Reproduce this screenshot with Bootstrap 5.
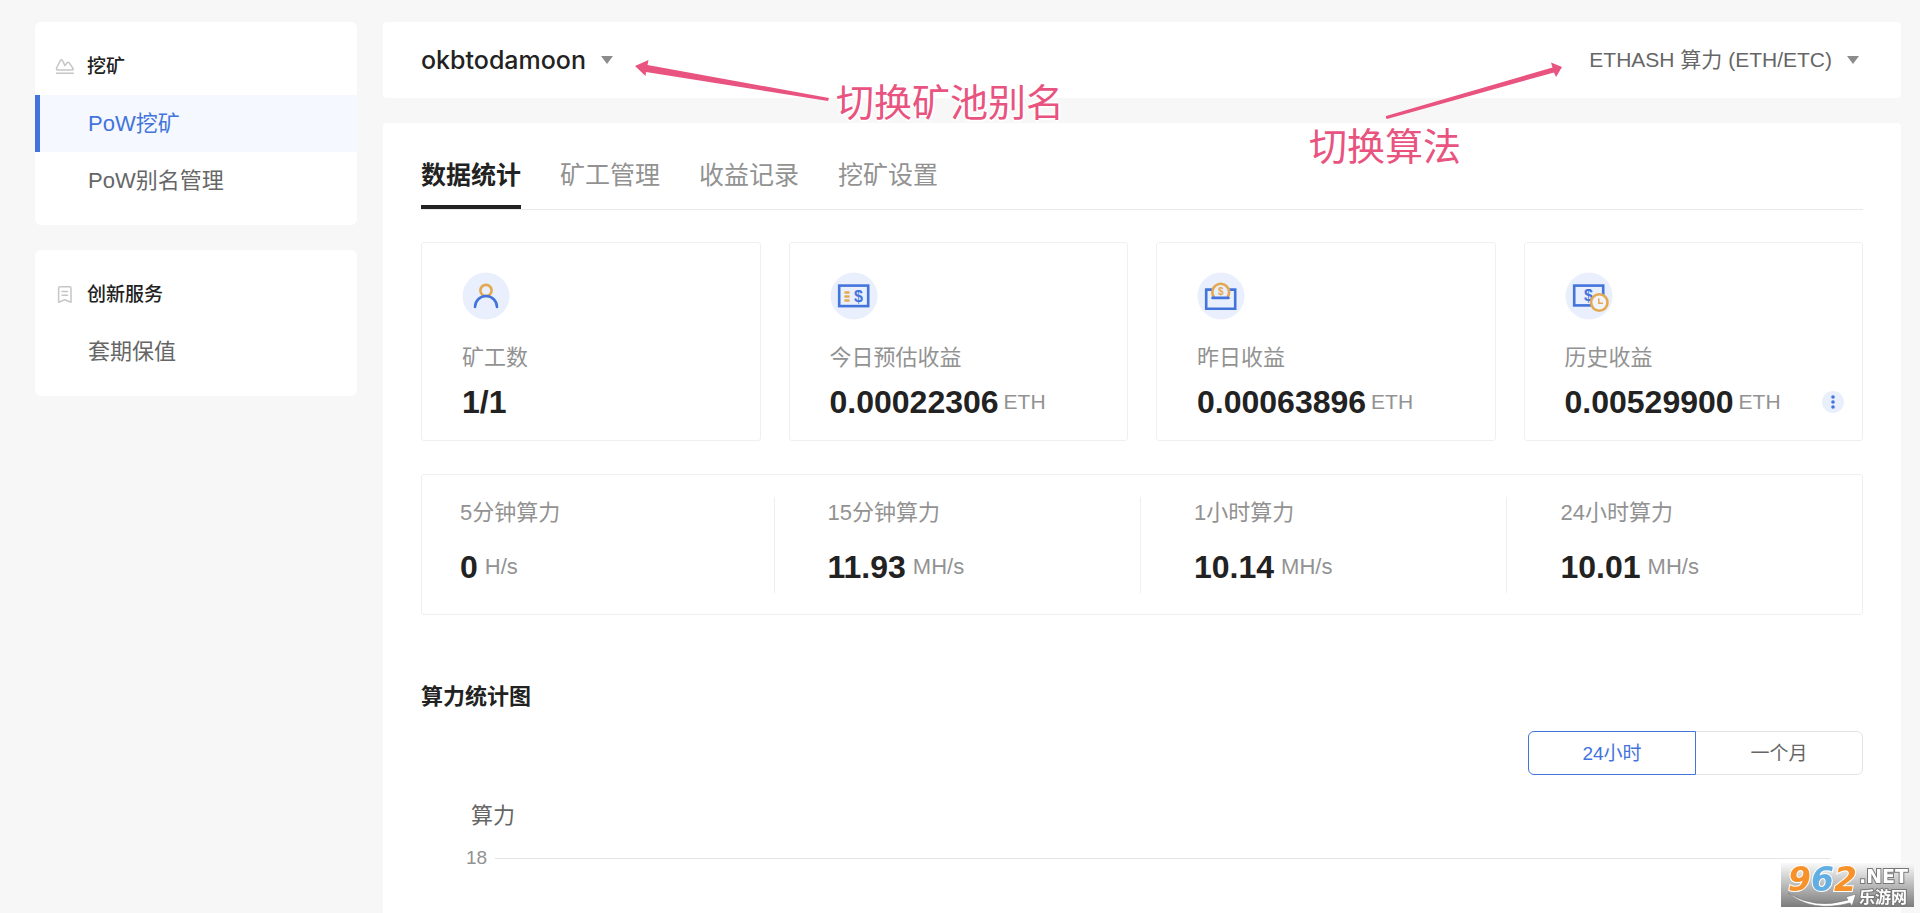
<!DOCTYPE html>
<html lang="zh-CN">
<head>
<meta charset="utf-8">
<meta name="viewport" content="width=device-width, initial-scale=1">
<title>PoW挖矿</title>
<link href="https://cdn.jsdelivr.net/npm/bootstrap@5.3.0/dist/css/bootstrap.min.css" rel="stylesheet">
<style>
  :root { --ink: #222; --soft: #666; --mute: #929292; --blue: #4374dc; --tint: #e9effc; --gold: #e3a94f; --rule: #efefef; --pink: #e9537f; }
  body { font-family: "Liberation Sans", "Noto Sans CJK SC", sans-serif; font-size: 22px; line-height: 30px; color: var(--ink); background: #f7f7f7; }
  a { text-decoration: none; }
  .page { min-height: 100vh; padding: 22px 19px 0 35px; gap: 26px; }
  .side { width: 322px; gap: 25px; }
  .side-box { background: #fff; border-radius: 6px; padding: 16px 0; }
  .side-title { font-size: 19px; font-weight: 500; line-height: 57px; padding-left: 20px; gap: 12px; margin: 0; }
  .side-link { line-height: 57px; padding-left: 53px; color: var(--soft); }
  .side-link.active { background: #f5f8fe; color: var(--blue); border-left: 5px solid var(--blue); padding-left: 48px; }
  .topbar { background: #fff; border-radius: 4px; height: 76px; padding: 0 38px; }
  .pick { background: none; border: 0; padding: 0; color: var(--soft); font-size: 21px; gap: 15px; }
  .pick-name { font-family: Inter, "Liberation Sans", sans-serif; font-size: 25px; font-weight: 500; color: var(--ink); }
  .pick svg { display: block; }
  .note { position: absolute; color: var(--pink); font-size: 38px; line-height: 44px; white-space: nowrap; text-shadow: 2px 0 #fff, -2px 0 #fff, 0 2px #fff, 0 -2px #fff; z-index: 2; }
  .arrow { position: absolute; z-index: 2; fill: var(--pink); }
  .note-alias { left: 453px; top: 59px; }
  .arrow-alias { left: 250px; top: 36px; }
  .note-algo { right: 440px; top: 103px; }
  .arrow-algo { right: 336px; top: 36px; }
  .panel { background: #fff; border-radius: 4px 4px 0 0; margin-top: 25px; padding: 36px 38px 0; }
  .tabs { gap: 39px; border-bottom: 1px solid #e9e9e9; }
  .tabs a { font-size: 25px; line-height: 32px; padding-bottom: 14px; border-bottom: 4px solid transparent; color: var(--mute); }
  .tabs a.active { font-weight: 700; color: var(--ink); border-color: var(--ink); }
  .stats { display: grid; grid-template-columns: repeat(4, 1fr); gap: 28px; margin-top: 32px; }
  .stat { border: 1px solid var(--rule); border-radius: 3px; padding: 29px 18px 18px 40px; }
  .stat svg { display: block; }
  .caption { color: var(--mute); }
  .stat .caption { margin: 23px 0 9px; }
  .figure-row { gap: 7px; line-height: 40px; color: var(--mute); }
  .figure-row strong { font-size: 32px; color: var(--ink); }
  .stat .figure-row { gap: 5px; font-size: 21px; }
  .more { width: 22px; height: 22px; padding: 0; border: 0; border-radius: 50%; background: var(--tint); }
  .rates { display: grid; grid-template-columns: 353fr 367fr 367fr 355fr; border: 1px solid var(--rule); border-radius: 3px; margin-top: 33px; padding: 22px 0 21px; }
  .rate { padding: 1px 0 6px 53px; border-right: 1px solid var(--rule); }
  .rate:first-child { padding-left: 38px; }
  .rate:last-child { border: 0; }
  .rate .caption { margin-bottom: 19px; }
  .chart-title { font-size: 22px; line-height: 30px; font-weight: 600; margin: 67px 0 19px; }
  .range { width: 335px; }
  .range .btn { --bs-btn-font-size: 19px; --bs-btn-line-height: 30px; --bs-btn-padding-y: 6px; --bs-btn-color: var(--soft); --bs-btn-border-color: #e3e3e3; --bs-btn-border-radius: 6px; --bs-btn-active-color: var(--blue); --bs-btn-active-bg: #fff; --bs-btn-active-border-color: var(--blue); flex: 1 1 0; padding: 7px 0 5px; }
  .axis-name { color: var(--soft); margin: 26px 0 12px 50px; }
  .tick { font-size: 19px; color: var(--mute); gap: 8px; padding: 0 33px 0 45px; }
  .tick i { height: 1px; background: #e4e4e4; }
  .site-mark { position: fixed; right: 6px; bottom: 6px; z-index: 3; overflow: visible; }
</style>
</head>
<body>
<div class="page d-flex">
  <aside class="side d-flex flex-column flex-shrink-0">
    <nav class="side-box d-flex flex-column" aria-label="挖矿">
      <h2 class="side-title d-flex align-items-center">
        <svg width="20" height="20" fill="none" stroke="#c6c6c6" stroke-width="1.5" stroke-linejoin="round" stroke-linecap="round"><path d="M2.5 13C1.2 13 1.4 11.5 1.8 10.5L5.3 3.6Q6.3 2 7.5 3.6L9.9 8.6L12.2 5.7Q13.2 4.8 14.2 5.9L17.9 11.2Q18.6 13 17.3 13ZM1.5 16.2H18.3"/></svg>
        挖矿</h2>
      <a class="side-link active" href="#">PoW挖矿</a>
      <a class="side-link" href="#">PoW别名管理</a>
    </nav>
    <nav class="side-box d-flex flex-column" aria-label="创新服务">
      <h2 class="side-title d-flex align-items-center">
        <svg width="20" height="20" fill="none" stroke="#c6c6c6" stroke-width="1.5" stroke-linejoin="round" stroke-linecap="round"><path d="M5 1.8H14.6Q16 1.8 16 3.2V17.3L9.8 14.8L3.6 17.3V3.2Q3.6 1.8 5 1.8ZM7 6.4H12.6M7 10.2H12.6"/></svg>
        创新服务</h2>
      <a class="side-link" href="#">套期保值</a>
    </nav>
  </aside>

  <main class="d-flex flex-column flex-grow-1">
    <header class="topbar d-flex align-items-center justify-content-between position-relative">
      <button type="button" class="pick pick-name d-flex align-items-center">okbtodamoon
        <svg width="12" height="8"><path d="M0 0H12L6 8Z" fill="#8c8c8c"/></svg></button>
      <button type="button" class="pick d-flex align-items-center pe-1">ETHASH 算力 (ETH/ETC)
        <svg width="12" height="8"><path d="M0 0H12L6 8Z" fill="#8c8c8c"/></svg></button>
      <svg class="arrow arrow-alias" width="200" height="48"><path d="M2 8L15.500 2L14.500 7L196 40L195 43L13 14L12.500 18Z"/></svg>
      <span class="note note-alias">切换矿池别名</span>
      <svg class="arrow arrow-algo" width="184" height="64"><path d="M181 9L170 4.500L171.500 9.500L5 58Q4.500 60 6 61L173 14.500L175 19Z"/></svg>
      <span class="note note-algo">切换算法</span>
    </header>

    <section class="panel flex-grow-1">
      <nav class="tabs d-flex">
        <a class="active" href="#">数据统计</a>
        <a href="#">矿工管理</a>
        <a href="#">收益记录</a>
        <a href="#">挖矿设置</a>
      </nav>

      <div class="stats">
        <article class="stat">
          <svg width="48" height="48" fill="none" stroke-width="2.6" stroke-linecap="round"><circle cx="24" cy="24" r="23.500" fill="#e9effc"/><circle cx="24" cy="18.500" r="5.600" stroke="#e3a94f"/><path d="M13 35a11 11 0 0 1 22 0" stroke="#4374dc"/></svg>
          <div class="caption">矿工数</div>
          <div class="figure-row d-flex align-items-center"><strong>1/1</strong></div>
        </article>
        <article class="stat">
          <svg width="48" height="48" fill="none" stroke-width="2.6"><circle cx="24" cy="24" r="23.500" fill="#e9effc"/><rect x="9.200" y="13.600" width="29" height="20.500" stroke="#4374dc"/><path d="M15.500 20.500h3M15.500 24.500h3M15.500 28.500h3" stroke="#e3a94f" stroke-linecap="round"/><text x="28.500" y="29.500" text-anchor="middle" font-size="16" font-weight="700" fill="#4374dc">$</text></svg>
          <div class="caption">今日预估收益</div>
          <div class="figure-row d-flex align-items-center"><strong>0.00022306</strong>ETH</div>
        </article>
        <article class="stat">
          <svg width="48" height="48" fill="none" stroke-width="2.6"><circle cx="24" cy="24" r="23.500" fill="#e9effc"/><path d="M15 17.600H9.200V36.700H38.200V17.600H32" stroke="#4374dc"/><path d="M17 25.200a8.400 8.400 0 1 1 13.400 0" stroke="#e3a94f"/><path d="M15.500 25.900H31.500" stroke="#4374dc" stroke-linecap="round"/><text x="23.700" y="23" text-anchor="middle" font-size="10" font-weight="700" fill="#e3a94f">$</text></svg>
          <div class="caption">昨日收益</div>
          <div class="figure-row d-flex align-items-center"><strong>0.00063896</strong>ETH</div>
        </article>
        <article class="stat">
          <svg width="48" height="48" fill="none" stroke-width="2.6" overflow="visible"><circle cx="24" cy="24" r="23.500" fill="#e9effc"/><rect x="9.200" y="13.600" width="29" height="19.800" stroke="#4374dc"/><text x="23.500" y="29" text-anchor="middle" font-size="16" font-weight="700" fill="#4374dc">$</text><circle cx="34.300" cy="30.500" r="8.200" fill="#f3f4fa" stroke="#e3a94f"/><path d="M33.800 26.500V31.300H38" stroke="#e3a94f" stroke-width="1.500"/></svg>
          <div class="caption">历史收益</div>
          <div class="figure-row d-flex align-items-center"><strong>0.00529900</strong>ETH
            <button type="button" class="more d-flex align-items-center justify-content-center ms-auto" aria-label="更多"><svg width="4" height="14" fill="#4374dc"><circle cx="2" cy="2" r="1.800"/><circle cx="2" cy="7" r="1.800"/><circle cx="2" cy="12" r="1.800"/></svg></button></div>
        </article>
      </div>

      <div class="rates">
        <div class="rate"><div class="caption">5分钟算力</div><div class="figure-row d-flex align-items-center"><strong>0</strong>H/s</div></div>
        <div class="rate"><div class="caption">15分钟算力</div><div class="figure-row d-flex align-items-center"><strong>11.93</strong>MH/s</div></div>
        <div class="rate"><div class="caption">1小时算力</div><div class="figure-row d-flex align-items-center"><strong>10.14</strong>MH/s</div></div>
        <div class="rate"><div class="caption">24小时算力</div><div class="figure-row d-flex align-items-center"><strong>10.01</strong>MH/s</div></div>
      </div>

      <h3 class="chart-title">算力统计图</h3>
      <div class="range btn-group d-flex ms-auto" role="group" aria-label="时间范围">
        <button type="button" class="btn active">24小时</button>
        <button type="button" class="btn">一个月</button>
      </div>
      <div class="axis-name">算力</div>
      <div class="tick d-flex align-items-center">18<i class="flex-grow-1"></i></div>
    </section>
  </main>
</div>

<svg class="site-mark" width="133" height="44" viewBox="0 0 133 44">
  <defs><linearGradient id="plate" x1="0" y1="0" x2="0" y2="1"><stop offset="0" stop-color="#fafafa"/><stop offset="1" stop-color="#7c7c7c"/></linearGradient></defs>
  <rect width="133" height="44" fill="url(#plate)"/>
  <path d="M7 30Q34 47 67 37L65 34L75 31L71 43L69 40Q31 50 7 30Z" fill="#fff" stroke="#777" stroke-width=".6"/>
  <g font-family="DejaVu Sans" font-weight="700" stroke="#fff" stroke-width="2" paint-order="stroke">
    <text x="7" y="28" font-size="33" font-style="italic" fill="#f7922a">9<tspan fill="#62aee2">6</tspan>2</text>
    <text x="78" y="20" font-size="19" fill="#fff" stroke="#777">.NET</text>
  </g>
  <text x="78" y="40" font-family="Noto Sans CJK SC" font-size="16" font-weight="700" fill="#fff" stroke="#777" stroke-width="2" paint-order="stroke">乐游网</text>
</svg>
<script src="https://cdn.jsdelivr.net/npm/bootstrap@5.3.0/dist/js/bootstrap.bundle.min.js"></script>
</body>
</html>
